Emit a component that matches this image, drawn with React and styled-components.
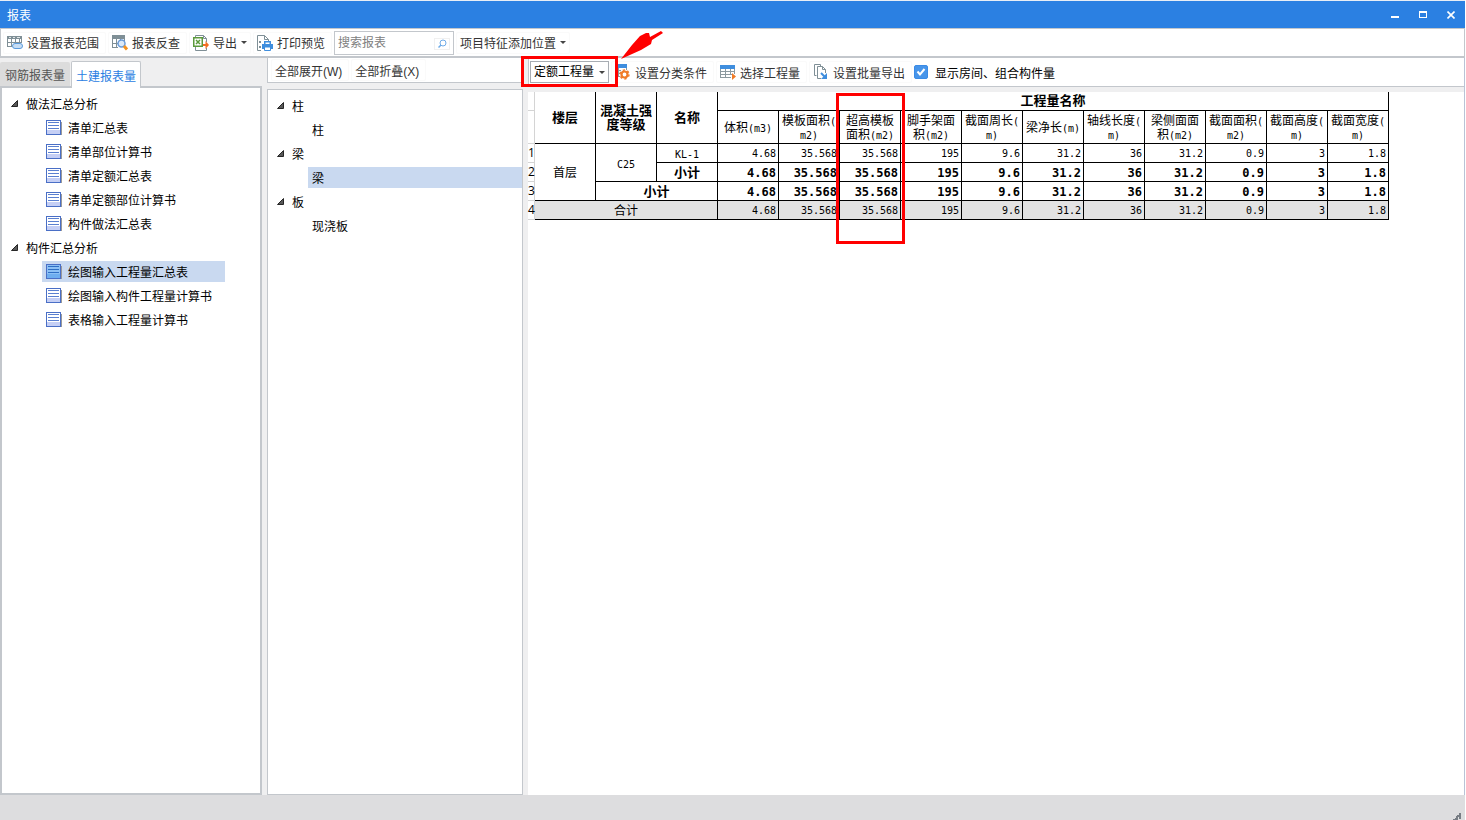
import React, { useState } from "react";
import styled, { createGlobalStyle, css } from "styled-components";

const colors = {
    accent: "#2b80e2",
    line: "#c3c7cc",
    face: "#efeff0",
    footer: "#dddddf",
    select: "#c9d9f0",
    mark: "#ff0000",
    text: "#333333",
};

const reportTree = [
    {
        name: "做法汇总分析",
        items: ["清单汇总表", "清单部位计算书", "清单定额汇总表", "清单定额部位计算书", "构件做法汇总表"],
    },
    {
        name: "构件汇总分析",
        items: ["绘图输入工程量汇总表", "绘图输入构件工程量计算书", "表格输入工程量计算书"],
    },
];

const componentTree = [
    { name: "柱", items: ["柱"] },
    { name: "梁", items: ["梁"] },
    { name: "板", items: ["现浇板"] },
];

const columns = [
    ["体积(m3)"],
    ["模板面积(", "m2)"],
    ["超高模板", "面积(m2)"],
    ["脚手架面", "积(m2)"],
    ["截面周长(", "m)"],
    ["梁净长(m)"],
    ["轴线长度(", "m)"],
    ["梁侧面面", "积(m2)"],
    ["截面面积(", "m2)"],
    ["截面高度(", "m)"],
    ["截面宽度(", "m)"],
];

const values = ["4.68", "35.568", "35.568", "195", "9.6", "31.2", "36", "31.2", "0.9", "3", "1.8"];

/* ---------- icons ---------- */

const RangeIcon = () => (
    <svg width="16" height="16" viewBox="0 0 16 16" shapeRendering="crispEdges">
        <path d="M0 1h15v3H0z" fill="#7f8f96" />
        <path d="M.5 1v11M4.5 4v8M8.5 4v4M12.5 4v4M14.5 4v4M0 7.5h15M0 11.5h5" stroke="#7f8f96" fill="none" />
        <path d="M2 2h2v1H2zM6 2h2v1H6zM10 2h3v1h-3z" fill="#dfe4e6" />
        <rect x="5.5" y="8.5" width="10" height="5" rx="2.5" fill="#c7def5" stroke="#5b9bdc" shapeRendering="auto" />
    </svg>
);

const CheckBackIcon = () => (
    <svg width="16" height="16" viewBox="0 0 16 16">
        <g shapeRendering="crispEdges">
            <path d="M0 0h13v4H0z" fill="#7f8f96" />
            <path d="M.5 3v10M4.5 4v9M8.5 4v2M12.5 4v2M0 8.5h6M0 12.5h6" stroke="#7f8f96" fill="none" />
        </g>
        <circle cx="9.5" cy="8.5" r="3.5" fill="#dbe9f8" stroke="#6a9bd8" strokeWidth="1.5" />
        <path d="M12 11l3 3.400" stroke="#f5921e" strokeWidth="3" />
    </svg>
);

const ExportIcon = () => (
    <svg width="16" height="16" viewBox="0 0 16 16">
        <path d="M2.500 2V.5h8l3 3V7M2.500 12v3.500h11V13" fill="none" stroke="#7f8f96" />
        <path d="M10.500.5v3h3" fill="none" stroke="#7f8f96" />
        <rect x=".75" y="2.750" width="8.500" height="8.500" fill="#fff" stroke="#5c9a3c" strokeWidth="1.500" />
        <path d="M3 5l4 4M7 5L3 9" stroke="#5c9a3c" strokeWidth="1.500" />
        <path d="M10 9h2.500V6l3.500 4-3.500 4v-3H10z" fill="#f36f21" />
    </svg>
);

const PreviewIcon = () => (
    <svg width="16" height="16" viewBox="0 0 16 16">
        <path d="M4 15.500H.5V.5h7l4 4V6M7.500.5v4h4" fill="none" stroke="#7f8f96" />
        <path d="M2 6h2v2H2zM2 11h2v2H2z" fill="#7f8f96" />
        <path d="M7.750 9V6.750h5.500V9" fill="#fff" stroke="#3f8ede" strokeWidth="1.500" />
        <path d="M5 9h11v5h-2v-2H7v2H5z" fill="#3f8ede" />
        <path d="M7.500 12v3.500h6V12z" fill="#fff" stroke="#3f8ede" />
    </svg>
);

const ClassifyIcon = () => (
    <svg width="16" height="16" viewBox="0 0 16 16">
        <g shapeRendering="crispEdges">
            <path d="M0 0h12v4H0z" fill="#3f8ede" />
            <path d="M3.500 4v9M11.500 4v2M0 6.500h6M0 9.500h5M0 12.500h5" stroke="#8c999f" fill="none" />
        </g>
        <circle cx="9.500" cy="10.500" r="3" fill="#fff" stroke="#f07c28" strokeWidth="2.200" />
        <circle cx="9.500" cy="10.500" r="4.500" fill="none" stroke="#f07c28" strokeWidth="1.400" strokeDasharray="2.300 2.410" />
    </svg>
);

const PickIcon = () => (
    <svg width="16" height="16" viewBox="0 0 16 16">
        <g shapeRendering="crispEdges">
            <path d="M0 1h15v4H0z" fill="#3f8ede" />
            <path d="M.5 5v9M5.500 5v9M10.500 5v6M14.500 5v5M0 7.500h15M0 10.500h12M0 13.500h11" stroke="#8c999f" fill="none" />
        </g>
        <path d="M12 9v7l4-3.500z" fill="#f07c28" />
    </svg>
);

const BatchIcon = () => (
    <svg width="16" height="16" viewBox="0 0 16 16">
        <path d="M3.500 11.500h-2V.5h6v2" fill="none" stroke="#7f8f96" />
        <path d="M8 14.500H4.500v-12h5l3 3V9M9.500 2.500v3h3" fill="none" stroke="#7f8f96" />
        <path d="M8 9l4 4" stroke="#3f8ede" strokeWidth="2" />
        <path d="M14 9v6H8z" fill="#3f8ede" />
    </svg>
);

const ReportIcon = ({ active }) => (
    <svg width="16" height="16" viewBox="0 0 16 16" shapeRendering="crispEdges">
        <path d="M2 15h14V2h-1v13H2z" fill="#9a9a9a" />
        <rect x=".5" y=".5" width="14" height="14" fill={active ? "#8cc0f5" : "#fff"} stroke="#4a6fc6" />
        <path d="M1 10h13v4H1z" fill={active ? "#6eaef0" : "#c5cff5"} />
        <path d="M2 2.500h11M2 5.500h11M2 8.500h11" stroke={active ? "#2f6fc4" : "#5b80d0"} />
    </svg>
);

const Expander = () => (
    <svg width="7" height="7" viewBox="0 0 7 7">
        <path d="M6.500 .5v6h-6z" fill="#595959" stroke="#262626" />
    </svg>
);

const Caret = () => (
    <svg width="6" height="3" viewBox="0 0 6 3">
        <path d="M0 0h6L3 3z" fill="#444" />
    </svg>
);

/* ---------- parts ---------- */

// Latin characters sit in half the width of a Chinese one
const Mixed = ({ text }) =>
    text.split(/([\x20-\x7e]+)/).map((part, i) => (i % 2 ? <Half key={i}>{part}</Half> : part));

const Tree = ({ label, data, icons, selected, onSelect }) => (
    <TreeList aria-label={label}>
        {data.map((group) => (
            <li key={group.name}>
                <TreeGroup type="button" aria-expanded="true">
                    <Expander />
                    {group.name}
                </TreeGroup>
                <TreeChildren $fit={icons}>
                    {group.items.map((item) => (
                        <TreeRow key={item}>
                            <TreeItem type="button" $active={item === selected.item && group.name === selected.group}
                                onClick={() => onSelect({ group: group.name, item })}>
                                {icons && <ReportIcon active={item === selected.item} />}
                                {item}
                            </TreeItem>
                        </TreeRow>
                    ))}
                </TreeChildren>
            </li>
        ))}
    </TreeList>
);

const Values = () => values.map((value, i) => <NumCell key={i}>{value}</NumCell>);

const ReportTable = () => (
    <Table>
        <colgroup>
            <RowNumCol />
            <col span={14} />
        </colgroup>
        <thead>
            <HeadRow>
                <RowNum />
                <HeadCell rowSpan={2}>楼层</HeadCell>
                <HeadCell rowSpan={2}>混凝土强<br />度等级</HeadCell>
                <HeadCell rowSpan={2}>名称</HeadCell>
                <HeadCell colSpan={11}>工程量名称</HeadCell>
            </HeadRow>
            <ColumnRow>
                <RowNum />
                {columns.map((lines) => (
                    <ColumnCell key={lines.join("")}>
                        {lines.map((line) => <Line key={line}><Mixed text={line} /></Line>)}
                    </ColumnCell>
                ))}
            </ColumnRow>
        </thead>
        <tbody>
            <Row>
                <RowNum>1</RowNum>
                <Cell rowSpan={3}>首层</Cell>
                <Cell rowSpan={2}><Half>C25</Half></Cell>
                <Cell><Half>KL-1</Half></Cell>
                <Values />
            </Row>
            <Row $bold>
                <RowNum>2</RowNum>
                <Cell>小计</Cell>
                <Values />
            </Row>
            <Row $bold>
                <RowNum>3</RowNum>
                <Cell colSpan={2}>小计</Cell>
                <Values />
            </Row>
            <Row $total>
                <RowNum>4</RowNum>
                <Cell colSpan={3}>合计</Cell>
                <Values />
            </Row>
        </tbody>
    </Table>
);

const App = () => {
    const [report, setReport] = useState({ group: "构件汇总分析", item: "绘图输入工程量汇总表" });
    const [component, setComponent] = useState({ group: "梁", item: "梁" });
    const [showRooms, setShowRooms] = useState(true);

    return (
        <Window>
            <GlobalStyle />
            <TitleBar>
                <Title>报表</Title>
                <WindowBtn type="button" aria-label="最小化">
                    <svg width="8" height="8" viewBox="0 0 8 8"><path d="M0 5h8v2H0z" fill="#fff" /></svg>
                </WindowBtn>
                <WindowBtn type="button" aria-label="最大化">
                    <svg width="8" height="8" viewBox="0 0 8 8"><path d="M0 0h8v7H0zM1 2v4h6V2z" fill="#fff" fillRule="evenodd" /></svg>
                </WindowBtn>
                <WindowBtn type="button" aria-label="关闭">
                    <svg width="8" height="8" viewBox="0 0 8 8"><path d="M.5.5l7 7M7.500.5l-7 7" stroke="#fff" strokeWidth="1.600" /></svg>
                </WindowBtn>
            </TitleBar>
            <Toolbar>
                <ToolBtn type="button"><RangeIcon />设置报表范围</ToolBtn>
                <ToolBtn type="button"><CheckBackIcon />报表反查</ToolBtn>
                <ToolBtn type="button" $menu><ExportIcon />导出<Caret /></ToolBtn>
                <ToolBtn type="button"><PreviewIcon />打印预览</ToolBtn>
                <SearchBox>
                    <SearchInput type="text" aria-label="搜索报表" placeholder="搜索报表" />
                    <SearchBtn type="button" aria-label="搜索">
                        <svg width="9" height="9" viewBox="0 0 9 9">
                            <circle cx="5" cy="4" r="3" fill="none" stroke="#6fabe8" />
                            <path d="M3 6L.5 8.500" stroke="#6fabe8" strokeWidth="1.500" />
                        </svg>
                    </SearchBtn>
                </SearchBox>
                <ToolBtn type="button" $menu>项目特征添加位置<Caret /></ToolBtn>
            </Toolbar>
            <Main>
                <ReportColumn>
                    <Tabs role="tablist">
                        <Tab type="button" role="tab" aria-selected="false">钢筋报表量</Tab>
                        <Tab type="button" role="tab" aria-selected="true" $active>土建报表量</Tab>
                    </Tabs>
                    <Panel $thick>
                        <Tree label="报表" data={reportTree} icons selected={report} onSelect={setReport} />
                    </Panel>
                </ReportColumn>
                <ComponentColumn>
                    <ExpandBar>
                        <ToolBtn type="button">全部展开(W)</ToolBtn>
                        <ToolBtn type="button">全部折叠(X)</ToolBtn>
                    </ExpandBar>
                    <Panel>
                        <Tree label="构件" data={componentTree} selected={component} onSelect={setComponent} />
                    </Panel>
                </ComponentColumn>
                <ContentColumn>
                    <ContentBar>
                        <QuantityBox>
                            <QuantitySelect aria-label="工程量类型" defaultValue="定额工程量">
                                <option>定额工程量</option>
                                <option>清单工程量</option>
                            </QuantitySelect>
                            <SelectCaret><Caret /></SelectCaret>
                            <SelectMark />
                            <MarkArrow width="44" height="30" viewBox="0 0 44 30" aria-hidden="true">
                                <path d="M1 28L12 14 20 5 26 2 29 2 30 6 41 0 43 2 32 9 31 13 21 19z" fill={colors.mark} />
                            </MarkArrow>
                        </QuantityBox>
                        <ToolBtn type="button"><ClassifyIcon />设置分类条件</ToolBtn>
                        <ToolBtn type="button"><PickIcon />选择工程量</ToolBtn>
                        <ToolBtn type="button"><BatchIcon />设置批量导出</ToolBtn>
                        <CheckLabel>
                            <CheckInput type="checkbox" checked={showRooms} onChange={(e) => setShowRooms(e.target.checked)} />
                            {showRooms && (
                                <CheckTick width="14" height="14" viewBox="0 0 14 14">
                                    <path d="M3.500 6.500L6 9.500 10.500 4" fill="none" stroke="#fff" strokeWidth="2" />
                                </CheckTick>
                            )}
                            显示房间、组合构件量
                        </CheckLabel>
                    </ContentBar>
                    <Sheet>
                        <ReportTable />
                        <ColumnMark />
                    </Sheet>
                </ContentColumn>
            </Main>
            <StatusBar>
                <svg width="10" height="7" viewBox="0 0 10 7" shapeRendering="crispEdges">
                    <path d="M7 0h2v2H7zM4 3h2v2H4zM7 2h2v4H7zM5 2h2v2H5zM1 6h2v1H1zM3 5h3v2H3z" fill="#777d84" />
                </svg>
            </StatusBar>
        </Window>
    );
};

/* ---------- styles ---------- */

const GlobalStyle = createGlobalStyle`
    * {
        box-sizing: border-box;
    }
    body {
        margin: 0;
        background-color: #fff;
    }
    body, button, input, select {
        font-family: "Liberation Sans", "Noto Sans CJK SC", sans-serif;
        font-size: 12px;
        color: ${colors.text};
    }
    svg {
        flex: none;
        display: block;
    }
`;

const Window = styled.div`
    display: flex;
    flex-direction: column;
    min-height: 100vh;
    margin-right: 1px;
    border-top: 1px solid #e8eef6;
    background-color: ${colors.face};
`;

const TitleBar = styled.header`
    display: flex;
    align-items: center;
    height: 27px;
    padding-left: 7px;
    background-color: ${colors.accent};
`;

const Title = styled.h1`
    flex: 1;
    margin: 0;
    font-size: 12px;
    font-weight: 400;
    color: #fff;
`;

const WindowBtn = styled.button`
    display: flex;
    justify-content: center;
    align-items: center;
    width: 28px;
    height: 27px;
    padding: 0;
    border: none;
    background: none;
`;

const Toolbar = styled.div`
    display: flex;
    align-items: center;
    gap: 2px;
    height: 30px;
    padding-left: 2px;
    border: 1px solid ${colors.line};
    border-bottom-width: 2px;
    background-color: #fff;
`;

const ToolBtn = styled.button`
    display: flex;
    align-items: center;
    gap: 4px;
    height: 22px;
    padding: 0 ${props => props.$menu ? "3px" : "6px"} 0 3px;
    border: 1px solid #fafafa;
    border-radius: 2px;
    background-color: #fff;
    white-space: nowrap;
    &:hover {
        border-color: ${colors.line};
    }
`;

const SearchBox = styled.div`
    position: relative;
    width: 120px;
`;

const SearchInput = styled.input`
    display: block;
    width: 100%;
    height: 24px;
    padding: 0 24px 0 3px;
    border: 1px solid ${colors.line};
    outline: none;
    &::placeholder {
        color: #808080;
    }
`;

const SearchBtn = styled.button`
    position: absolute;
    right: 4px;
    top: 7px;
    display: flex;
    justify-content: center;
    align-items: center;
    width: 16px;
    height: 12px;
    padding: 0;
    border: 1px solid #f0f0f0;
    background-color: #fff;
`;

const Main = styled.main`
    flex: 1;
    display: flex;
    gap: 5px;
    border-right: 1px solid #b9c3d6;
`;

const ReportColumn = styled.section`
    display: flex;
    flex-direction: column;
    flex: none;
    width: 262px;
`;

const Tabs = styled.div`
    display: flex;
    align-items: flex-end;
    gap: 1px;
    height: 30px;
    margin-bottom: -2px;
`;

const Tab = styled.button`
    position: relative;
    width: 70px;
    height: 24px;
    margin-bottom: 2px;
    padding: 0;
    border: none;
    border-radius: 2px 2px 0 0;
    background-color: #dcdcdc;
    color: #555;
    ${props => props.$active && css`
        height: 27px;
        margin-bottom: 0;
        border: 1px solid ${colors.line};
        border-bottom: none;
        background-color: #fff;
        color: ${colors.accent};
    `}
`;

const Panel = styled.div`
    flex: 1;
    padding-top: 3px;
    border: ${props => props.$thick ? "2px" : "1px"} solid ${colors.line};
    background-color: #fff;
`;

const ComponentColumn = styled.section`
    display: flex;
    flex-direction: column;
    gap: 6px;
    flex: none;
    width: 256px;
`;

const ExpandBar = styled.div`
    display: flex;
    align-items: center;
    gap: 2px;
    height: 25px;
    padding-left: 3px;
    border: 1px solid ${colors.line};
    border-top: none;
    background-color: #fff;
`;

const TreeList = styled.ul`
    margin: 0;
    padding: 0;
    list-style: none;
`;

const TreeGroup = styled.button`
    display: flex;
    align-items: center;
    gap: 8px;
    height: 24px;
    padding: 0 9px;
    border: none;
    background: none;
    color: #000;
`;

const TreeChildren = styled.ul`
    width: ${props => props.$fit ? "max-content" : "auto"};
    margin: 0 0 0 40px;
    padding: 0;
    list-style: none;
`;

const TreeRow = styled.li`
    height: 24px;
    padding: 2px 0 1px;
`;

const TreeItem = styled.button`
    display: flex;
    align-items: center;
    gap: 6px;
    width: 100%;
    min-width: 183px;
    height: 21px;
    padding: 0 4px;
    border: none;
    background-color: ${props => props.$active ? colors.select : "transparent"};
    color: #000;
    white-space: nowrap;
`;

const ContentColumn = styled.section`
    flex: 1;
    min-width: 0;
    display: flex;
    flex-direction: column;
    gap: 5px;
`;

const ContentBar = styled.div`
    display: flex;
    align-items: center;
    gap: 2px;
    height: 29px;
    padding-left: 1px;
    border-left: 1px solid ${colors.line};
    border-bottom: 1px solid ${colors.line};
    background-color: #fff;
`;

const QuantityBox = styled.div`
    position: relative;
    width: 79px;
`;

const QuantitySelect = styled.select`
    display: block;
    appearance: none;
    width: 100%;
    height: 22px;
    padding: 0 12px 0 3px;
    border: 1px solid #a8adb3;
    border-radius: 0;
    background-color: #fff;
    color: #000;
`;

const SelectCaret = styled.span`
    position: absolute;
    right: 4px;
    top: 10px;
    pointer-events: none;
`;

const SelectMark = styled.div`
    position: absolute;
    z-index: 1;
    inset: -5px -9px -4px -9px;
    border: 3px solid ${colors.mark};
    pointer-events: none;
`;

const MarkArrow = styled.svg`
    position: absolute;
    z-index: 1;
    left: 90px;
    bottom: 22px;
    pointer-events: none;
`;

const CheckLabel = styled.label`
    position: relative;
    display: flex;
    align-items: center;
    gap: 7px;
    color: #000;
    white-space: nowrap;
`;

const CheckInput = styled.input`
    appearance: none;
    width: 14px;
    height: 14px;
    margin: 0;
    border: 1px solid #3a8be6;
    border-radius: 2px;
    background-color: #fff;
    &:checked {
        background-color: #4795ea;
    }
`;

const CheckTick = styled.svg`
    position: absolute;
    left: 0;
    pointer-events: none;
`;

const Sheet = styled.div`
    position: relative;
    flex: 1;
    background-color: #fff;
`;

const ColumnMark = styled.div`
    position: absolute;
    left: 308px;
    top: 1px;
    width: 69px;
    height: 151px;
    border: 3px solid ${colors.mark};
    pointer-events: none;
`;

const Table = styled.table`
    table-layout: fixed;
    width: 861px;
    border-collapse: separate;
    border-spacing: 0;
    color: #000;
    font-size: 12px;
    line-height: 14px;
`;

const RowNumCol = styled.col`
    width: 7px;
`;

const RowNum = styled.th`
    padding: 0;
    border-right: 1px solid #d4d4d4;
    border-bottom: 1px solid #d4d4d4;
    background-color: #fff;
    font-family: "Open Sans", sans-serif;
    font-weight: 400;
    font-size: 12px;
`;

const Half = styled.span`
    font-family: "DejaVu Sans Mono", monospace;
    font-size: 10px;
    line-height: 1;
`;

const Line = styled.div`
    white-space: nowrap;
`;

const cell = css`
    padding: 0;
    border-right: 1px solid #000;
    border-bottom: 1px solid #000;
    text-align: center;
`;

const HeadCell = styled.th`
    ${cell}
    font-size: 13px;
    font-weight: 700;
`;

const ColumnCell = styled.th`
    ${cell}
    padding-top: 2px;
    font-weight: 400;
`;

const Cell = styled.td`
    ${cell}
    padding-top: 2px;
`;

const NumCell = styled.td`
    ${cell}
    padding: 2px 2px 0 0;
    font-family: "DejaVu Sans Mono", monospace;
    font-size: 10px;
    text-align: right;
`;

const HeadRow = styled.tr`
    height: 19px;
`;

const ColumnRow = styled.tr`
    height: 33px;
`;

const Row = styled.tr`
    height: 19px;
    ${props => props.$bold && css`
        ${Cell} {
            font-size: 13px;
            font-weight: 700;
        }
        ${NumCell} {
            font-size: 12px;
            font-weight: 700;
        }
    `}
    ${props => props.$total && css`
        ${Cell}, ${NumCell} {
            background-color: #e3e3e3;
        }
    `}
`;

const StatusBar = styled.footer`
    display: flex;
    justify-content: flex-end;
    align-items: flex-end;
    height: 25px;
    padding-right: 3px;
    background-color: ${colors.footer};
`;

export default App;
